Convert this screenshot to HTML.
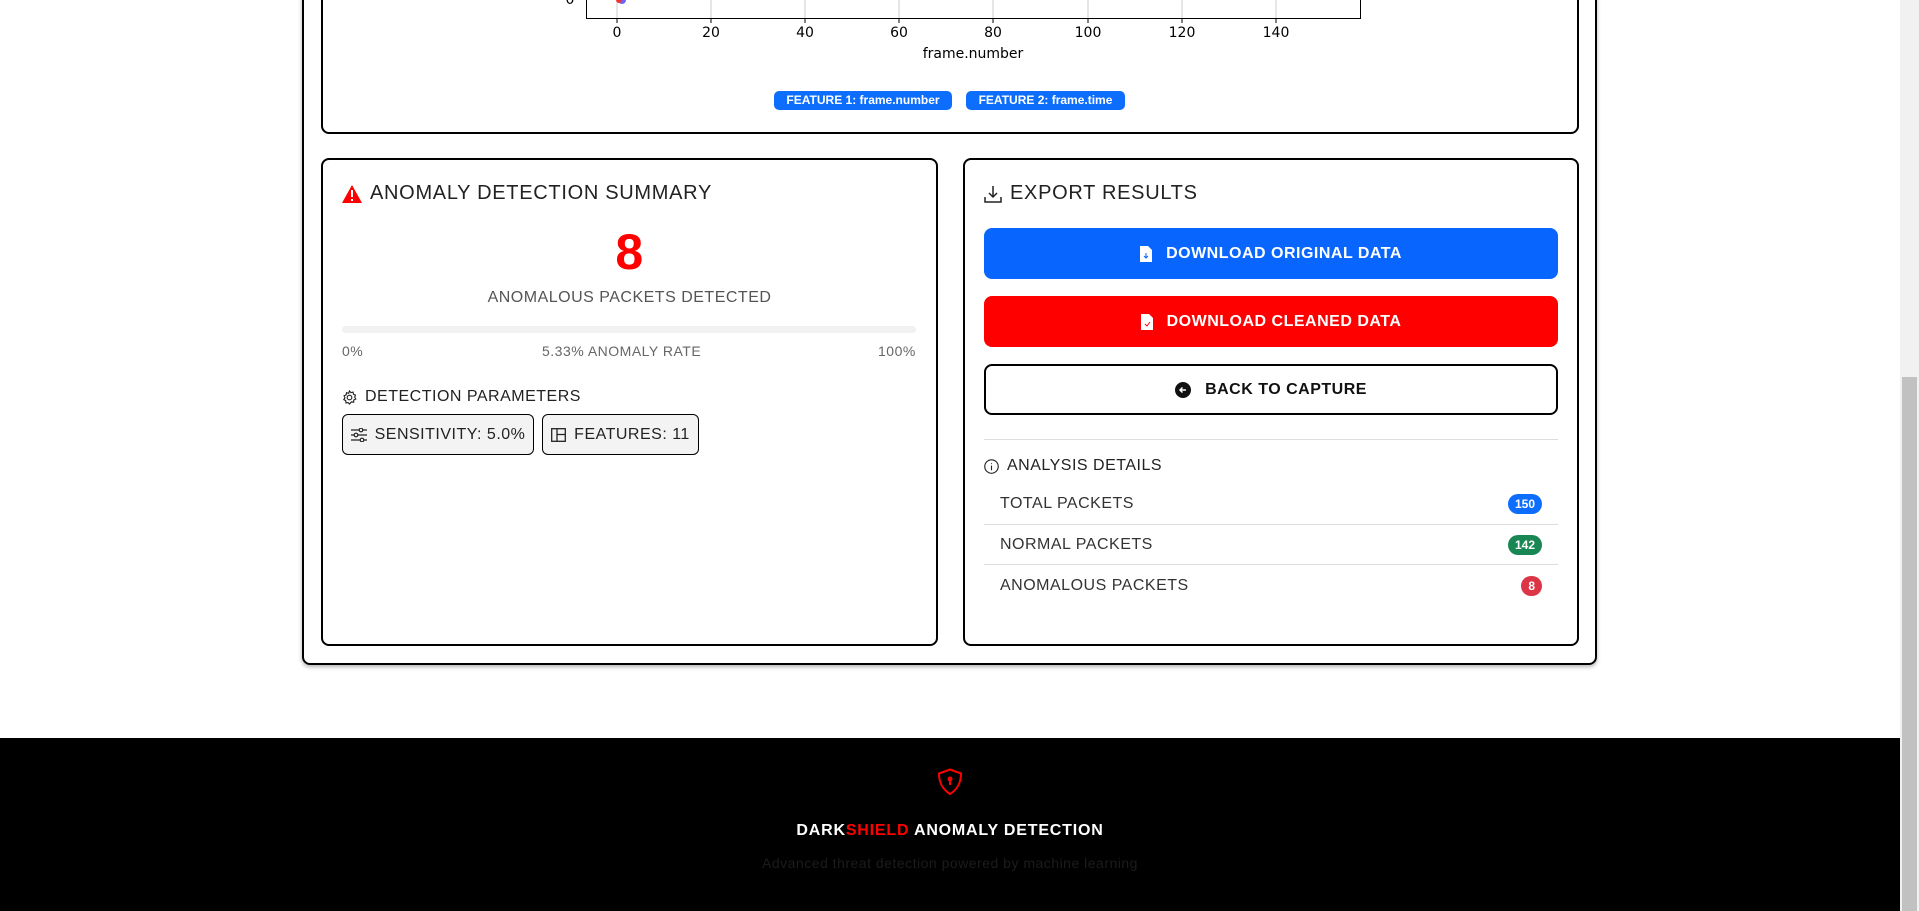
<!DOCTYPE html>
<html><head><meta charset="utf-8"><style>
*{box-sizing:border-box;margin:0;padding:0}
body{width:1919px;height:911px;overflow:hidden;background:#fff;font-family:"Liberation Sans",sans-serif;position:relative;color:#222;letter-spacing:.5px}
.abs{position:absolute}
.outer{left:302px;top:-20px;width:1295px;height:685px;border:2px solid #000;border-radius:8px;box-shadow:0 2px 4px rgba(0,0,0,.3)}
.card{border:2px solid #000;border-radius:8px;background:#fff}
.title{font-size:20px;color:#222;display:flex;align-items:center;gap:8px;letter-spacing:.7px}
.btn{left:984px;width:574px;height:51px;border-radius:8px;display:flex;align-items:center;justify-content:center;gap:14px;font-weight:bold;font-size:16px;color:#fff}
.row{left:984px;width:574px;height:40px;display:flex;align-items:center;justify-content:space-between;padding:0 16px;font-size:16px;color:#333}
.pill{color:#fff;font-weight:bold;font-size:12px;border-radius:10px;padding:3px 7px;letter-spacing:0}
.tick{font-family:"DejaVu Sans",sans-serif;font-size:14px;color:#000;transform:translateX(-50%);letter-spacing:0}
</style></head><body>
<div class="abs outer"></div>
<div class="abs card" style="left:321px;top:-20px;width:1258px;height:154px"></div>
<div class="abs" style="left:586px;top:-10px;width:775px;height:29px;border:1.5px solid #000;border-top:none"></div>
<svg class="abs" style="left:586px;top:0" width="780" height="30">
<g stroke="#ccc"><line x1="31" y1="0" x2="31" y2="18"/><line x1="125" y1="0" x2="125" y2="18"/><line x1="219" y1="0" x2="219" y2="18"/><line x1="313" y1="0" x2="313" y2="18"/><line x1="407" y1="0" x2="407" y2="18"/><line x1="502" y1="0" x2="502" y2="18"/><line x1="596" y1="0" x2="596" y2="18"/><line x1="690" y1="0" x2="690" y2="18"/></g>
<circle cx="36" cy="0" r="4" fill="#66f"/><circle cx="33" cy="0" r="3" fill="#e33"/>
<g stroke="#000"><line x1="31" y1="18" x2="31" y2="23"/><line x1="125" y1="18" x2="125" y2="23"/><line x1="219" y1="18" x2="219" y2="23"/><line x1="313" y1="18" x2="313" y2="23"/><line x1="407" y1="18" x2="407" y2="23"/><line x1="502" y1="18" x2="502" y2="23"/><line x1="596" y1="18" x2="596" y2="23"/><line x1="690" y1="18" x2="690" y2="23"/></g>
</svg>
<div class="abs tick" style="left:570px;top:-8px">0</div>
<div class="abs tick" style="left:617px;top:25px">0</div>
<div class="abs tick" style="left:711px;top:25px">20</div>
<div class="abs tick" style="left:805px;top:25px">40</div>
<div class="abs tick" style="left:899px;top:25px">60</div>
<div class="abs tick" style="left:993px;top:25px">80</div>
<div class="abs tick" style="left:1088px;top:25px">100</div>
<div class="abs tick" style="left:1182px;top:25px">120</div>
<div class="abs tick" style="left:1276px;top:25px">140</div>
<div class="abs tick" style="left:973px;top:46px">frame.number</div>
<div class="abs pill" style="left:774px;top:91px;width:178px;height:19px;background:#0d6efd;border-radius:5px;font-size:12px;padding:2px 0;text-align:center">FEATURE 1: frame.number</div>
<div class="abs pill" style="left:966px;top:91px;width:159px;height:19px;background:#0d6efd;border-radius:5px;font-size:12px;padding:2px 0;text-align:center">FEATURE 2: frame.time</div>

<div class="abs card" style="left:321px;top:158px;width:617px;height:488px"></div>
<div class="abs title" style="left:342px;top:182px"><svg width="20" height="18" viewBox="0 0 20 18"><path d="M10 0L20 18H0Z" fill="#f00"/><rect x="9" y="5" width="2" height="7" fill="#fff"/><rect x="9" y="14" width="2" height="2" fill="#fff"/></svg>ANOMALY DETECTION SUMMARY</div>
<div class="abs" style="left:321px;width:617px;top:223px;text-align:center;font-size:50px;font-weight:bold;color:#f00">8</div>
<div class="abs" style="left:321px;width:617px;top:289px;text-align:center;font-size:16px;color:#555">ANOMALOUS PACKETS DETECTED</div>
<div class="abs" style="left:342px;top:326px;width:574px;height:7px;background:#f1f1f1;border-radius:4px"></div>
<div class="abs" style="left:342px;top:343px;font-size:14px;color:#666">0%</div>
<div class="abs" style="left:542px;top:343px;font-size:14px;color:#666">5.33% ANOMALY RATE</div>
<div class="abs" style="left:878px;top:343px;font-size:14px;color:#666">100%</div>
<div class="abs" style="left:342px;top:388px;font-size:16px;color:#222;display:flex;gap:8px;align-items:center"><svg width="15" height="15" viewBox="0 0 16 16" fill="none" stroke="#222" stroke-width="1.2"><circle cx="8" cy="8" r="2.5"/><path d="M8 1l1.5 1.8 2.3-.6.4 2.3 2.2 1-.9 2.1 1.2 2-2.1 1-.2 2.4-2.3-.3L8 15l-1.5-1.6-2.3.3-.2-2.4-2.1-1 1.2-2-.9-2.1 2.2-1 .4-2.3 2.3.6z"/></svg>DETECTION PARAMETERS</div>
<div class="abs" style="left:342px;top:414px;width:192px;height:41px;border:1.5px solid #000;border-radius:6px;background:#f3f3f3;display:flex;align-items:center;justify-content:center;gap:8px;font-size:16px"><svg width="16" height="14" viewBox="0 0 16 14" fill="none" stroke="#222" stroke-width="1.2"><path d="M0 2h16M0 7h16M0 12h16"/><circle cx="10" cy="2" r="1.8" fill="#f3f3f3"/><circle cx="5" cy="7" r="1.8" fill="#f3f3f3"/><circle cx="11" cy="12" r="1.8" fill="#f3f3f3"/></svg>SENSITIVITY: 5.0%</div>
<div class="abs" style="left:542px;top:414px;width:157px;height:41px;border:1.5px solid #000;border-radius:6px;background:#f3f3f3;display:flex;align-items:center;justify-content:center;gap:8px;font-size:16px"><svg width="15" height="14" viewBox="0 0 15 14" fill="none" stroke="#222" stroke-width="1.3"><rect x="0.7" y="0.7" width="13.6" height="12.6"/><path d="M6 0.7v12.6M6 6.5h8.3"/></svg>FEATURES: 11</div>

<div class="abs card" style="left:963px;top:158px;width:616px;height:488px"></div>
<div class="abs title" style="left:984px;top:182px"><svg width="18" height="18" viewBox="0 0 18 18" fill="none" stroke="#222" stroke-width="1.5"><path d="M9 1v11M5 8l4 4 4-4M1 12v5h16v-5"/></svg>EXPORT RESULTS</div>
<div class="abs btn" style="top:228px;background:#0866ff"><svg width="12" height="16" viewBox="0 0 12 16"><path d="M0 0h8l4 4v12H0z" fill="#fff"/><path d="M6 7v5M4 10l2 2 2-2" stroke="#0866ff" fill="none"/></svg>DOWNLOAD ORIGINAL DATA</div>
<div class="abs btn" style="top:296px;background:#f00"><svg width="12" height="16" viewBox="0 0 12 16"><path d="M0 0h8l4 4v12H0z" fill="#fff"/><path d="M4 10l2 2 3-4" stroke="#f00" fill="none"/></svg>DOWNLOAD CLEANED DATA</div>
<div class="abs btn" style="top:364px;border:2px solid #000;color:#111;font-weight:bold"><svg width="16" height="16" viewBox="0 0 16 16"><circle cx="8" cy="8" r="8" fill="#111"/><path d="M11 8H5M7.5 5.5L5 8l2.5 2.5" stroke="#fff" stroke-width="1.5" fill="none"/></svg>BACK TO CAPTURE</div>
<div class="abs" style="left:984px;top:439px;width:574px;height:1px;background:#ddd"></div>
<div class="abs" style="left:984px;top:457px;font-size:16px;color:#222;display:flex;gap:8px;align-items:center"><svg width="15" height="15" viewBox="0 0 16 16" fill="none" stroke="#222" stroke-width="1.2"><circle cx="8" cy="8" r="7.2"/><path d="M8 7v5M8 4.5v1"/></svg>ANALYSIS DETAILS</div>
<div class="abs row" style="top:484px"><span>TOTAL PACKETS</span><span class="pill" style="background:#0d6efd">150</span></div>
<div class="abs" style="left:984px;top:524px;width:574px;height:1px;background:#ddd"></div>
<div class="abs row" style="top:525px"><span>NORMAL PACKETS</span><span class="pill" style="background:#198754">142</span></div>
<div class="abs" style="left:984px;top:564px;width:574px;height:1px;background:#ddd"></div>
<div class="abs row" style="top:566px"><span>ANOMALOUS PACKETS</span><span class="pill" style="background:#dc3545">8</span></div>

<div class="abs" style="left:0;top:738px;width:1900px;height:173px;background:#000"></div>
<svg class="abs" style="left:937px;top:768px" width="26" height="28" viewBox="0 0 26 28"><path d="M13 1.5L24 5.5c0 10-4 16-11 20.5C6 21.5 2 15.5 2 5.5z" fill="none" stroke="#f00" stroke-width="2"/><circle cx="13" cy="11" r="2.5" fill="#f00"/><rect x="12" y="12" width="2" height="5" fill="#f00"/></svg>
<div class="abs" style="left:0;width:1900px;top:822px;text-align:center;font-size:16px;font-weight:bold;color:#fff;letter-spacing:.8px">DARK<span style="color:#f00">SHIELD</span> ANOMALY DETECTION</div>
<div class="abs" style="left:0;width:1900px;top:855px;text-align:center;font-size:14px;color:#1c1c1c">Advanced threat detection powered by machine learning</div>
<div class="abs" style="left:1900px;top:0;width:19px;height:911px;background:#f1f1f1"></div>
<div class="abs" style="left:1902px;top:377px;width:15px;height:534px;background:#c1c1c1"></div>
</body></html>
